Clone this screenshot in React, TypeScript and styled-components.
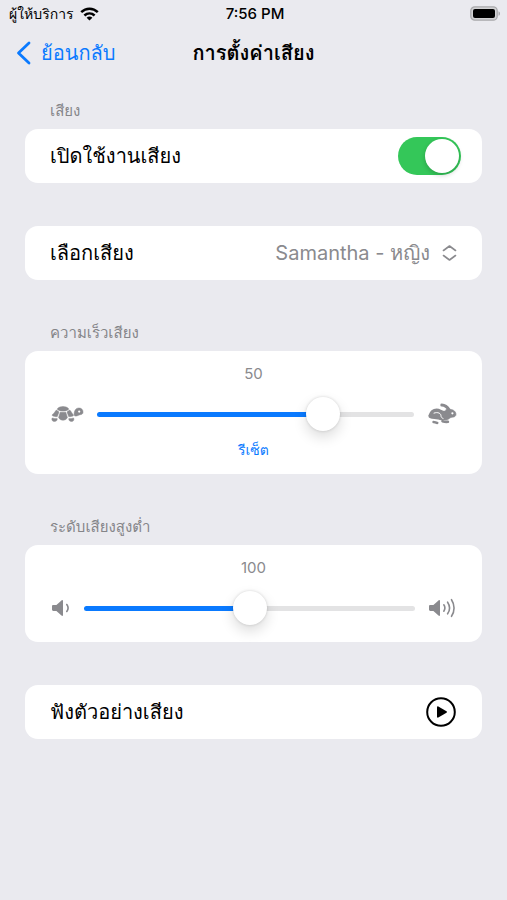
import React, { useState } from "react";
import styled, { createGlobalStyle } from "styled-components";

const GlobalStyle = createGlobalStyle`
  * { box-sizing: border-box; }
  body {
    margin: 0;
    background: #eaeaef;
    color: #000;
    font-family: Inter, Thonburi, Loma, "Noto Sans Thai Looped", "Noto Sans", sans-serif;
  }
  button, select, input { font: inherit; margin: 0; }
`;

const Screen = styled.div`
  min-height: 100vh;
  background: #eaeaef;
`;

const StatusBar = styled.div`
  display: grid;
  grid-template-columns: 1fr auto 1fr;
  align-items: center;
  height: 27px;
  padding: 0 6px 0 9px;
  font-size: 15px;
  line-height: 26px;
  font-weight: 500;
`;

const Carrier = styled.div`
  display: flex;
  align-items: center;
  gap: 6px;
  font-size: 14px;
`;

const BatterySlot = styled.div`
  display: flex;
  justify-content: flex-end;
`;

const NavBar = styled.header`
  display: grid;
  grid-template-columns: 1fr auto 1fr;
  align-items: center;
  height: 51px;
  padding: 0 16px;
`;

const BackLink = styled.a`
  display: flex;
  align-items: center;
  gap: 10px;
  color: #0a7aff;
  font-size: 20px;
  text-decoration: none;
`;

const Title = styled.h1`
  margin: 0;
  font-size: 20px;
  font-weight: 600;
`;

const Content = styled.main`
  display: flex;
  flex-direction: column;
  gap: 43px;
  padding: 23px 25px 24px;
`;

const Group = styled.section`
  display: flex;
  flex-direction: column;
`;

const GroupTitle = styled.h2`
  margin: 0;
  padding: 0 25px 8px;
  font-size: 15px;
  line-height: 20px;
  font-weight: 400;
  color: #858589;
`;

const Card = styled.div`
  border-radius: 13px;
  background: #fff;
`;

const Row = styled(Card)`
  display: flex;
  align-items: center;
  justify-content: space-between;
  height: 54px;
  padding: 0 25px;
  font-size: 20px;
`;

const Switch = styled.input`
  appearance: none;
  display: flex;
  width: 63px;
  height: 38px;
  margin-right: -4px;
  padding: 2px;
  border-radius: 19px;
  background: #e4e4e6;
  cursor: pointer;

  &::before {
    content: "";
    width: 34px;
    height: 34px;
    border-radius: 50%;
    background: #fff;
    box-shadow: 0 2px 5px rgba(0, 0, 0, 0.2);
  }
  &:checked {
    justify-content: flex-end;
    background: #34c759;
  }
`;

const Picker = styled.span`
  display: flex;
  align-items: center;
  gap: 12px;
  color: #8a8a8e;
`;

const Select = styled.select`
  appearance: none;
  field-sizing: content;
  padding: 0;
  border: 0;
  background: transparent;
  color: inherit;
  line-height: 32px;
`;

const SliderCard = styled(Card)`
  display: flex;
  flex-direction: column;
  align-items: center;
  padding: 12px 25px 17px;
`;

const Value = styled.output`
  font-size: 15px;
  line-height: 22px;
  color: #8a8a8e;
`;

const SliderRow = styled.div`
  display: flex;
  align-items: center;
  align-self: stretch;
  gap: 13px;
  height: 34px;
  margin-top: 12px;
  color: #8a8a8e;

  svg { flex: none; }
`;

const Range = styled.input`
  appearance: none;
  flex: 1;
  min-width: 0;
  height: 5px;
  border-radius: 3px;
  background: linear-gradient(to right, #0a7aff var(--fill), #e3e3e4 var(--fill));
  cursor: pointer;

  &::-webkit-slider-thumb {
    appearance: none;
    width: 34px;
    height: 34px;
    border-radius: 50%;
    background: #fff;
    box-shadow: 0 6px 14px rgba(0, 0, 0, 0.14), 0 0 3px rgba(0, 0, 0, 0.16);
  }
`;

const ResetButton = styled.button`
  margin: 8px 0 -4px;
  padding: 0;
  border: 0;
  background: none;
  color: #0a7aff;
  font-size: 14px;
  font-weight: 500;
  line-height: 22px;
  cursor: pointer;
`;

const IconButton = styled.button`
  display: flex;
  padding: 0;
  border: 0;
  background: none;
  color: #000;
  cursor: pointer;
`;

const WifiIcon = () => (
  <svg width="19" height="14" viewBox="0 0 19 14" fill="none" stroke="#000" strokeWidth="2.5" aria-hidden="true">
    <path d="M1.2 5.2C6 .6 13 .6 17.8 5.2" />
    <path d="M4.4 8.5c3-2.8 7.200-2.800 10.200 0" />
    <path d="M9.500 13.600 6.600 10.700c1.700-1.600 4.100-1.600 5.800 0Z" fill="#000" stroke="none" />
  </svg>
);

const BatteryIcon = () => (
  <svg width="31" height="15" viewBox="0 0 31 15" aria-hidden="true">
    <rect x=".8" y=".8" width="26.400" height="13.400" rx="4" fill="#d2d2d4" stroke="#a9a9ac" strokeWidth="1.300" />
    <rect x="3" y="3" width="22" height="9" rx="2" fill="#000" />
    <path d="M28.500 5.200c2 .8 2 3.800 0 4.600Z" fill="#a9a9ac" />
  </svg>
);

const BackIcon = () => (
  <svg width="15" height="24" viewBox="0 0 15 24" fill="none" stroke="currentColor" strokeWidth="2.800" strokeLinecap="round" strokeLinejoin="round" aria-hidden="true">
    <path d="M13 2 2.500 12 13 22" />
  </svg>
);

const ChevronsIcon = () => (
  <svg width="15" height="18" viewBox="0 0 15 18" fill="none" stroke="currentColor" strokeWidth="1.600" strokeLinecap="round" strokeLinejoin="round" aria-hidden="true">
    <path d="M1.500 6.500 7.500 2l6 4.500M1.500 11.500l6 4.500 6-4.500" />
  </svg>
);

const TurtleIcon = () => (
  <svg width="34" height="18" viewBox="0 0 34 18" fill="currentColor" stroke="currentColor" strokeWidth=".5" strokeLinejoin="round" aria-hidden="true">
    <path d="M7.500 3.600C9.500.9 16.500.9 18.500 3.600c.4.700-.2 1.300-1 1.600-2.600 1.200-6.400 1.200-9 0-.8-.3-1.400-.9-1-1.600Z" />
    <path d="M6.400 5 9 6.900 7.300 11.600C5.500 11.800 3.400 11.500 2.300 10.600c-.5-.7.300-1.300 1.100-1.800C4.500 8 5 6.200 6.400 5Z" />
    <path d="M19.600 5 17 6.900l1.700 4.700c1.800.2 3.900-.1 4.700-1 .3-.6-.3-1.200-.9-1.800-.9-1.100-1.500-2.800-2.900-3.800Z" />
    <path d="M10.200 7.300h5.600l1.500 4.900C16.700 16.200 9.300 16.200 8.700 12.200Z" />
    <path d="M2.100 13c1.700.5 3.500.7 5.100.6.300 1.900-1.200 2.900-2.800 2.900-1.900 0-3.100-1.400-2.300-3.500Z" />
    <path d="M18.800 13.600c1.600.1 3.400-.1 4.800-.6.800 2.200-.2 3.500-2.100 3.500-1.500 0-3-1-2.700-2.900Z" />
    <path d="M24.200 10c-.4-3.400 1.200-7 4.700-7 2.700 0 4.400 2 4.100 4.500-.2 1.500-1.200 2-2.700 2.200-1.700.2-2.900 1.500-4.900 1.400-.7 0-1.100-.4-1.200-1.100Z" />
    <circle cx="29.200" cy="6.600" r="1.100" fill="#fff" stroke="none" />
  </svg>
);

const HareIcon = () => (
  <svg width="30" height="22" viewBox="0 0 30 22" fill="none" stroke="currentColor" strokeLinecap="round" strokeLinejoin="round" aria-hidden="true">
    <path d="M14.800 2c3 .1 5.600 2 7.400 5" strokeWidth="3" />
    <path d="M19.500 6.300c2-.1 5.100-.2 6.800.9 1.700 1 2.700 2.400 2.700 4.100 0 2-1.700 2.900-3.700 2.900-2.300 0-2.900 1.800-5 2.600-2.200.5-4.200-.8-4.600-2.900l1.700-5.200Z" fill="currentColor" strokeWidth=".6" />
    <path d="M2 12.700C3.200 9 6.200 6.200 9.600 6.200c3.200 0 4.800 1.900 7.900 2.600l-1.800 5c.3 1.500 1.200 2.200 2.400 2.800h-3.500c-3-.4-4.400-1.200-7.100-1.300C5.700 15.300 1.900 15 2 12.700Z" fill="currentColor" strokeWidth="1.400" />
    <path d="M15.500 18.200c1.800.6 3.600.8 5.400.6" strokeWidth="2.600" />
    <path d="M6.500 19c1.300 0 2.400.9 3.800 1" strokeWidth="2.400" />
    <path d="M7 10.100c4-1.500 7 .4 7 2.700 0 1.300.8 2.200 2.100 2.700" stroke="#fff" strokeWidth="1" />
    <circle cx="25.400" cy="10.300" r="1.100" fill="#fff" stroke="none" />
  </svg>
);

const SPEAKER = "M1 7.500c0-.9.500-1.400 1.400-1.400h3L10.500 1.400c.8-.7 1.500-.3 1.500.6v14c0 .9-.7 1.300-1.500.6L5.400 11.900h-3c-.9 0-1.400-.5-1.400-1.400Z";

const QuietIcon = () => (
  <svg width="21" height="18" viewBox="-1 0 21 18" fill="none" stroke="currentColor" strokeWidth="1.600" strokeLinecap="round" aria-hidden="true">
    <path d={SPEAKER} fill="currentColor" stroke="none" />
    <path d="M15.800 5.500c1.500 2 1.500 5 0 7" />
  </svg>
);

const LoudIcon = () => (
  <svg width="29" height="20" viewBox="0 -1 29 20" fill="none" stroke="currentColor" strokeWidth="1.600" strokeLinecap="round" aria-hidden="true">
    <path d={SPEAKER} fill="currentColor" stroke="none" />
    <path d="M15.800 5.800c1.300 1.900 1.300 4.500 0 6.400M19.600 3.200c2.400 3.500 2.400 8.100 0 11.600M23.500.7c3.400 5 3.400 11.600 0 16.600" />
  </svg>
);

const PlayIcon = () => (
  <svg width="32" height="32" viewBox="0 0 32 32" fill="none" aria-hidden="true">
    <circle cx="16" cy="16" r="13.800" stroke="currentColor" strokeWidth="2" />
    <path d="M12 11.200c0-.8.700-1.100 1.300-.8l8.200 4.900c.6.400.6 1 0 1.400l-8.200 4.900c-.6.300-1.300 0-1.300-.8Z" fill="currentColor" />
  </svg>
);

interface SliderProps {
  label: string;
  min: number;
  max: number;
  value: number;
  onChange: (value: number) => void;
}

function Slider({ label, min, max, value, onChange }: SliderProps) {
  const fill = `${((value - min) / (max - min)) * 100}%`;
  return (
    <Range
      type="range"
      aria-label={label}
      min={min}
      max={max}
      value={value}
      onChange={(e) => onChange(Number(e.target.value))}
      style={{ "--fill": fill } as React.CSSProperties}
    />
  );
}

export default function App() {
  const [enabled, setEnabled] = useState(true);
  const [rate, setRate] = useState(50);
  const [pitch, setPitch] = useState(100);

  return (
    <Screen lang="th">
      <GlobalStyle />
      <StatusBar>
        <Carrier>ผู้ให้บริการ <WifiIcon /></Carrier>
        <span>7:56 PM</span>
        <BatterySlot><BatteryIcon /></BatterySlot>
      </StatusBar>
      <NavBar>
        <BackLink href="#back"><BackIcon />ย้อนกลับ</BackLink>
        <Title>การตั้งค่าเสียง</Title>
      </NavBar>
      <Content>
        <Group>
          <GroupTitle>เสียง</GroupTitle>
          <Row>
            <label htmlFor="enabled">เปิดใช้งานเสียง</label>
            <Switch id="enabled" type="checkbox" role="switch" checked={enabled} onChange={(e) => setEnabled(e.target.checked)} />
          </Row>
        </Group>
        <Row>
          <label htmlFor="voice">เลือกเสียง</label>
          <Picker>
            <Select id="voice"><option>Samantha - หญิง</option></Select>
            <ChevronsIcon />
          </Picker>
        </Row>
        <Group>
          <GroupTitle>ความเร็วเสียง</GroupTitle>
          <SliderCard>
            <Value>{rate}</Value>
            <SliderRow>
              <TurtleIcon />
              <Slider label="ความเร็วเสียง" min={-90} max={100} value={rate} onChange={setRate} />
              <HareIcon />
            </SliderRow>
            <ResetButton type="button" onClick={() => setRate(50)}>รีเซ็ต</ResetButton>
          </SliderCard>
        </Group>
        <Group>
          <GroupTitle>ระดับเสียงสูงต่ำ</GroupTitle>
          <SliderCard>
            <Value>{pitch}</Value>
            <SliderRow>
              <QuietIcon />
              <Slider label="ระดับเสียงสูงต่ำ" min={0} max={200} value={pitch} onChange={setPitch} />
              <LoudIcon />
            </SliderRow>
          </SliderCard>
        </Group>
        <Row>
          <span id="preview">ฟังตัวอย่างเสียง</span>
          <IconButton type="button" aria-labelledby="preview"><PlayIcon /></IconButton>
        </Row>
      </Content>
    </Screen>
  );
}
